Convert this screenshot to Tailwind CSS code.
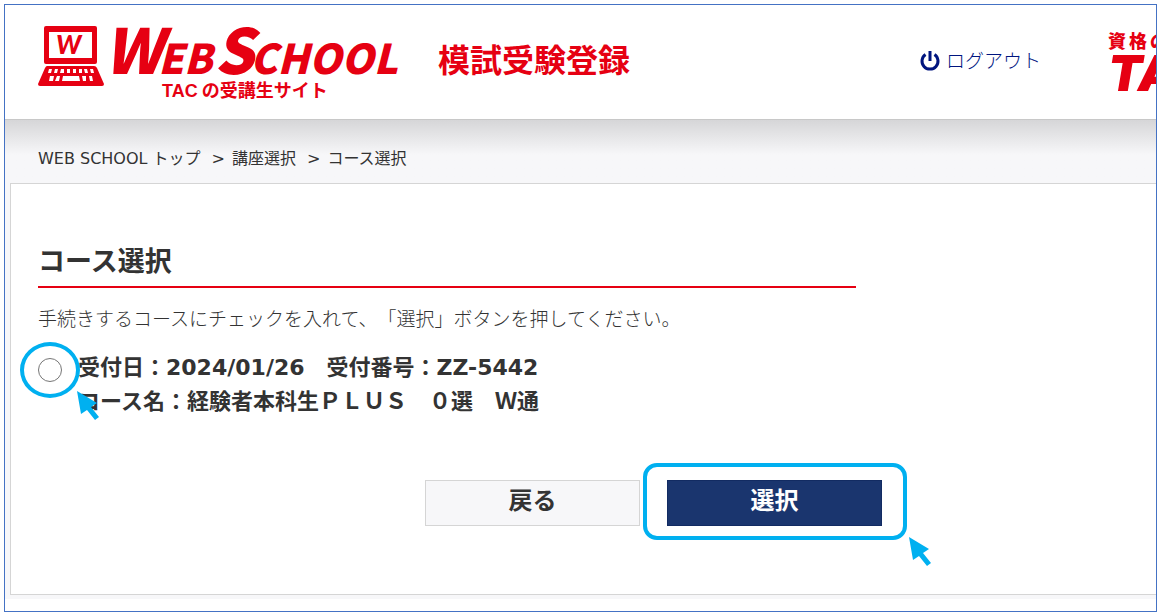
<!DOCTYPE html>
<html lang="ja">
<head>
    <meta charset="UTF-8">
    <meta name="viewport" content="width=device-width, initial-scale=1.0">
    <title>コース選択 | WEB SCHOOL</title>
    <script src="https://cdn.jsdelivr.net/npm/@tailwindcss/browser@4"></script>
</head>
<body class="min-h-screen bg-white pt-1 pl-1 pr-[3px] pb-[2px] font-['DejaVu_Sans','Noto_Sans_CJK_JP',sans-serif] text-[#333333]">
    <div class="border border-[#4472c4] pb-3 overflow-hidden">

        <!-- Header -->
        <header class="h-[115px] flex items-start pl-[33px] pt-[21px] bg-white border-b border-[#c8c8c8] text-[#e60012]">
            <a href="#" class="flex w-[400px] shrink-0">
                <svg class="w-[66px] h-[61px] shrink-0" viewBox="0 0 66 61" fill="#e60012">
                    <path fill-rule="evenodd" d="M8 0h49a2 2 0 0 1 2 2v34a2 2 0 0 1-2 2H8a2 2 0 0 1-2-2V2a2 2 0 0 1 2-2zM11 6v26h43V6z"/>
                    <path d="M9 40h47q2 0 3 2l7 16q0 2-2 2H2q-2 0-2-2l7-16q1-2 2-2z"/>
                    <text x="18" y="28" font-family="Lato" font-weight="900" font-style="italic" font-size="26">W</text>
                    <g fill="#ffffff">
                        <path d="M11 43h3l-1 4h-3zM17 43h3l-1 4h-3zM23 43h3v4h-4zM29 43h3v4h-3zM35 43h3v4h-3zM41 43h3v4h-3zM46 43h3l1 4h-3zM52 43h3l1 4h-3z"/>
                        <path d="M12 50h4l-1 5h-4zM19 50h3l-1 5h-4zM25 50h16l1 5H24zM44 50h4v5h-3zM51 50h3l1 5h-3z"/>
                    </g>
                </svg>
                <span class="flex flex-col">
                    <span class="h-[54px] flex items-baseline whitespace-nowrap font-['Noto_Sans_CJK_JP',sans-serif] font-black italic text-[41px] leading-[42px]">
                        <span class="text-[62px]">W</span><span class="-ml-1">EB</span>
                        <span class="ml-[2px] text-[62px]">S</span><span class="-ml-1">CHOOL</span>
                    </span>
                    <span class="ml-[58px] flex gap-1 text-[18px] leading-[22px] font-bold font-['Liberation_Sans','Noto_Sans_CJK_JP',sans-serif] whitespace-nowrap"><span>TAC</span><span>の受講生サイト</span></span>
                </span>
            </a>
            <h1 class="mt-3 text-[32px] leading-[46px] font-bold whitespace-nowrap">模試受験登録</h1>
            <a href="#" class="mt-4 ml-auto flex items-center gap-[6px] text-[#00157f] text-[19px] leading-[38px] font-light whitespace-nowrap">
                <svg class="w-5 h-5" viewBox="0 0 20 20" fill="none" stroke="#00157f" stroke-width="3">
                    <path d="M5.5 3.5a8 8 0 1 0 9 0"/>
                    <path d="M10 0v10"/>
                </svg>
                ログアウト
            </a>
            <a href="#" class="ml-[67px] mt-[6px] w-[48px] overflow-hidden whitespace-nowrap font-black">
                <span class="flex gap-[3px] text-[18px] leading-[20px]"><span>資</span><span>格</span><span>の</span></span>
                <span class="block font-['Inter',sans-serif] font-black italic text-[50px] leading-[42px]">TAC</span>
            </a>
        </header>

        <div class="bg-[#f7f7f9] pb-1">
            <!-- Breadcrumb -->
            <nav class="h-[63px] pl-[33px] pt-[27px] flex items-start text-[16px] leading-6 whitespace-nowrap bg-linear-to-b from-[#d6d6d8] to-[#f7f7f9] to-55%">
                <a href="#">WEB SCHOOL トップ</a>
                <span class="ml-[11px] mr-[7px]">&gt;</span>
                <a href="#">講座選択</a>
                <span class="ml-[11px] mr-[7px]">&gt;</span>
                <span>コース選択</span>
            </nav>

            <!-- Course select -->
            <main class="ml-[5px] h-[412px] pl-[27px] pt-[58px] bg-white border border-r-0 border-[#d5d5d5]">
                <h2 class="max-w-[818px] pb-1 border-b-2 border-[#e60012] text-[27px] leading-[40px] font-bold">コース選択</h2>
                <p class="mt-4 text-[19px] leading-[30px] font-light whitespace-nowrap [text-spacing-trim:space-all]">手続きするコースにチェックを入れて、「選択」ボタンを押してください。</p>

                <form>
                    <div class="mt-4 flex items-start">
                        <span class="relative mt-2 flex">
                            <input type="radio" id="course" name="course" class="appearance-none w-6 h-6 rounded-full border border-[#767676] bg-white">
                            <span class="absolute -left-[18px] -top-4 w-[60px] h-14 rounded-[50%] border-4 border-[#00b0f0]"></span>
                            <svg class="absolute left-[39px] top-[33px] w-6 h-[30px]" viewBox="0 0 24 30" fill="#00b0f0">
                                <path d="M0 0l20 12-6 4 8 10-4 3-8-10-6 4z"/>
                            </svg>
                        </span>
                        <label for="course" class="ml-4 pt-px text-[22px] leading-[34px] font-bold whitespace-nowrap [text-spacing-trim:space-all]">受付日：2024/01/26　受付番号：ZZ-5442<br>コース名：経験者本科生ＰＬＵＳ　０選　Ｗ通</label>
                    </div>

                    <div class="mt-[61px] ml-[387px] flex gap-[27px] text-[24px] font-bold">
                        <button type="button" class="w-[215px] h-[46px] pb-1 leading-[38px] bg-[#f7f7f9] border border-[#d5d5d5]">戻る</button>
                        <span class="relative">
                            <button type="submit" class="w-[215px] h-[46px] pb-1 leading-[38px] bg-[#1a356e] border border-[#122b62] text-white">選択</button>
                            <span class="absolute -left-6 -top-[17px] w-[264px] h-[77px] rounded-[14px] border-4 border-[#00b0f0] pointer-events-none"></span>
                            <svg class="absolute left-[242px] top-[57px] w-6 h-[30px]" viewBox="0 0 24 30" fill="#00b0f0">
                                <path d="M0 0l20 12-6 4 8 10-4 3-8-10-6 4z"/>
                            </svg>
                        </span>
                    </div>
                </form>
            </main>
        </div>
    </div>
</body>
</html>
